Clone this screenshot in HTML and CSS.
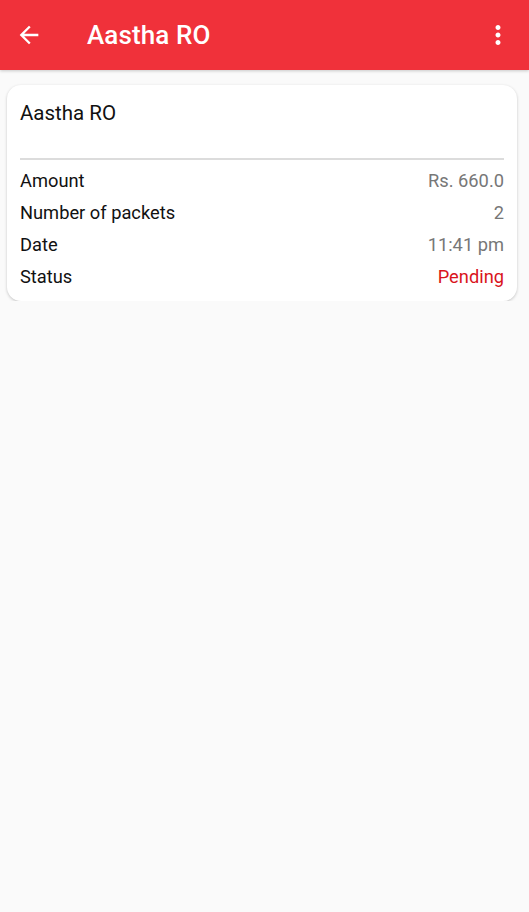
FILE: index.html
```html
<!DOCTYPE html>
<html lang="en">
<head>
  <meta charset="utf-8" />
  <meta name="viewport" content="width=device-width, initial-scale=1.0" />
  <title>Aastha RO</title>
  <link rel="stylesheet" href="styles.css">
</head>
<body>
  <header class="app-bar">
    <button class="icon-btn back" aria-label="Back">
      <svg width="28" height="28" viewBox="0 0 24 24"><path d="M20 11H7.83l5.59-5.59L12 4l-8 8 8 8 1.41-1.41L7.83 13H20v-2z" fill="#fff"/></svg>
    </button>
    <h1 class="title">Aastha RO</h1>
    <button class="icon-btn more" aria-label="More">
      <svg width="30" height="30" viewBox="0 0 24 24"><path d="M12 8c1.1 0 2-.9 2-2s-.9-2-2-2-2 .9-2 2 .9 2 2 2zm0 2c-1.1 0-2 .9-2 2s.9 2 2 2 2-.9 2-2-.9-2-2-2zm0 6c-1.1 0-2 .9-2 2s.9 2 2 2 2-.9 2-2-.9-2-2-2z" fill="#fff"/></svg>
    </button>
  </header>

  <main class="content">
    <section class="card">
      <h2 class="card-title">Aastha RO</h2>
      <hr class="divider">
      <div class="row"><span>Amount</span><span class="value">Rs. 660.0</span></div>
      <div class="row"><span>Number of packets</span><span class="value">2</span></div>
      <div class="row"><span>Date</span><span class="value">11:41 pm</span></div>
      <div class="row"><span>Status</span><span class="value pending">Pending</span></div>
    </section>
  </main>
</body>
</html>
```

FILE: styles.css
```css
/* Base */
body {
  margin: 0;
  font-family: Roboto, "Noto Sans", sans-serif;
  background-color: #fafafa;
  color: #111;
}

/* App bar */
.app-bar {
  height: 70px;
  background-color: #f0313a;
  display: flex;
  align-items: center;
  box-shadow: 0 1px 3px rgba(0,0,0,0.2);
}

.icon-btn {
  background: none;
  border: 0;
  padding: 0;
  display: flex;
}

.back {
  margin-left: 15px;
  margin-right: 44px;
}

.more {
  margin-left: auto;
  margin-right: 16px;
}

.title {
  margin: 0;
  color: #fff;
  font-size: 26px;
  font-weight: 500;
  letter-spacing: 0.1px;
}

/* Card */
.content {
  padding: 15px 12px 0 7px;
}

.card {
  background: #fff;
  border-radius: 14px;
  box-shadow: 0 1px 3px rgba(0,0,0,0.22);
  padding: 13px 13px 8px 13px;
}

.card-title {
  margin: 0;
  font-size: 20.5px;
  font-weight: 400;
  line-height: 30px;
}

.divider {
  border: 0;
  border-top: 2px solid #dcdcdc;
  margin: 30px 0 5px;
}

.row {
  display: flex;
  justify-content: space-between;
  font-size: 18.3px;
  line-height: 32px;
}

.value {
  color: #777;
}

.value.pending {
  color: #d9141c;
}
```
